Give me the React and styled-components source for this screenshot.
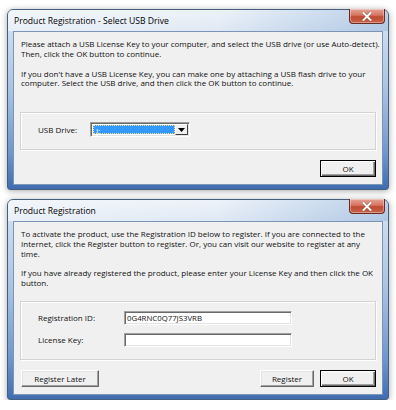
import styled, { createGlobalStyle } from "styled-components";

const GlobalStyle = createGlobalStyle`
  body {
    margin: 0;
    background: #ffffff;
    font-family: "Open Sans", "Noto Sans", "Liberation Sans", sans-serif;
  }
`;

const Page = styled.div`
  display: flex;
  flex-direction: column;
  gap: 9px;
  padding: 9px 7px 0 7px;
`;

const Window = styled.div`
  display: flex;
  flex-direction: column;
  width: 382px;
  height: ${(p) => p.$height}px;
  box-sizing: border-box;
  border: 1px solid #45607f;
  border-radius: 6px 6px 3px 3px;
  background: linear-gradient(
    to bottom,
    #e3ecf6 0px,
    #cddcee 22px,
    #a9c2e2 45%,
    #6f96cc 80%,
    #3f6db0 100%
  );
  box-shadow: 0 1px 6px rgba(0, 0, 0, 0.35);
`;

const TitleBar = styled.div`
  display: flex;
  align-items: flex-start;
  height: 21px;
  padding-left: 6px;
  border-radius: 5px 5px 0 0;
  background: linear-gradient(
    to right,
    rgba(255, 255, 255, 0.55) 0%,
    rgba(255, 255, 255, 0.35) 55%,
    rgba(120, 160, 210, 0.35) 100%
  );
`;

const Title = styled.div`
  align-self: center;
  font-size: 8.6px;
  color: #000000;
  white-space: nowrap;
`;

const CloseButton = styled.div`
  display: flex;
  align-items: center;
  justify-content: center;
  margin-left: auto;
  margin-right: 3px;
  margin-top: -1px;
  width: 36px;
  height: 15px;
  box-sizing: border-box;
  border: 1px solid #6b2a22;
  border-top: none;
  border-radius: 0 0 4px 4px;
  background: linear-gradient(to bottom, #e4a597 0%, #d6735f 45%, #c04a32 55%, #c9634a 100%);
  box-shadow: inset 0 0 0 1px rgba(255, 255, 255, 0.35);
`;

const Client = styled.div`
  flex: 1;
  display: flex;
  flex-direction: column;
  margin: 0 5px 4px 5px;
  background: #f0f0f0;
  border: 1px solid #7c95b6;
  font-size: 8px;
  line-height: 9.8px;
  color: #111111;
  padding: ${(p) => p.$padTop}px 6px 0 7px;
`;

const Para = styled.p`
  margin: 0 0 ${(p) => p.$gap}px 0;
  white-space: nowrap;
`;

const GroupBox = styled.div`
  display: flex;
  flex-direction: column;
  gap: 8px;
  margin: ${(p) => p.$top}px 0 0 -1px;
  padding: 9px 0 12px 17px;
  border: 1px solid #d3d3d3;
  box-shadow: inset 1px 1px 0 #ffffff, 1px 1px 0 #ffffff;
`;

const FieldRow = styled.div`
  display: flex;
  align-items: center;
`;

const Label = styled.div`
  width: ${(p) => p.$width}px;
  white-space: nowrap;
`;

const TextBox = styled.div`
  width: 168px;
  height: 14px;
  box-sizing: border-box;
  background: #ffffff;
  border-top: 1px solid #a0a0a0;
  border-left: 1px solid #a0a0a0;
  border-right: 1px solid #ffffff;
  border-bottom: 1px solid #ffffff;
  box-shadow: inset 1px 1px 0 #696969, inset -1px -1px 0 #e3e3e3;
  padding: 1px 2px;
  font-size: 7.8px;
  line-height: 11px;
  white-space: nowrap;
`;

const Combo = styled.div`
  display: flex;
  width: 100px;
  height: 15px;
  box-sizing: border-box;
  background: #ffffff;
  border-top: 1px solid #a0a0a0;
  border-left: 1px solid #a0a0a0;
  border-right: 1px solid #ffffff;
  border-bottom: 1px solid #ffffff;
  box-shadow: inset 1px 1px 0 #696969, inset -1px -1px 0 #e3e3e3;
  padding: 2px 1px 2px 2px;
`;

const ComboValue = styled.div`
  flex: 1;
  background: #3399ff;
  color: #ffffff;
  outline: 1px dotted #ffe08a;
  outline-offset: -1px;
  padding-left: 3px;
  font-size: 8px;
  line-height: 11px;
`;

const ComboArrow = styled.div`
  display: flex;
  align-items: center;
  justify-content: center;
  width: 13px;
  margin-top: -1px;
  margin-bottom: -1px;
  box-sizing: border-box;
  background: #f0f0f0;
  border-top: 1px solid #ffffff;
  border-left: 1px solid #ffffff;
  border-right: 1px solid #404040;
  border-bottom: 1px solid #404040;
`;

const ButtonBar = styled.div`
  display: flex;
  gap: 6px;
  margin-top: 10px;
`;

const Button = styled.div`
  display: flex;
  align-items: center;
  justify-content: center;
  width: ${(p) => p.$width}px;
  height: 17px;
  box-sizing: border-box;
  background: #f0f0f0;
  font-size: 8px;
  border-top: 1px solid ${(p) => (p.$default ? "#000000" : "#ffffff")};
  border-left: 1px solid ${(p) => (p.$default ? "#000000" : "#ffffff")};
  border-right: 1px solid ${(p) => (p.$default ? "#000000" : "#696969")};
  border-bottom: 1px solid ${(p) => (p.$default ? "#000000" : "#696969")};
  box-shadow: ${(p) =>
    p.$default
      ? "inset 1px 1px 0 #ffffff, inset -1px -1px 0 #696969, inset -2px -2px 0 #a0a0a0"
      : "inset -1px -1px 0 #a0a0a0, inset 1px 1px 0 #e3e3e3"};
  margin-left: ${(p) => (p.$push ? "auto" : "0")};
`;

function CloseX() {
  return (
    <svg width="10" height="9" viewBox="0 0 10 9">
      <path d="M1.5 1 L8.5 8 M8.5 1 L1.5 8" stroke="#3a1410" strokeWidth="3" strokeLinecap="square" opacity="0.35" />
      <path d="M1.5 1 L8.5 8 M8.5 1 L1.5 8" stroke="#ffffff" strokeWidth="2" strokeLinecap="square" />
    </svg>
  );
}

function DownArrow() {
  return (
    <svg width="7" height="4" viewBox="0 0 7 4">
      <path d="M0 0 L7 0 L3.5 4 Z" fill="#000000" />
    </svg>
  );
}

export default function App() {
  return (
    <>
      <GlobalStyle />
      <Page>
        <Window $height={181}>
          <TitleBar>
            <Title>Product Registration - Select USB Drive</Title>
            <CloseButton>
              <CloseX />
            </CloseButton>
          </TitleBar>
          <Client $padTop={7}>
            <Para $gap={10}>
              Please attach a USB License Key to your computer, and select the USB drive (or use Auto-detect).
              <br />
              Then, click the OK button to continue.
            </Para>
            <Para $gap={0}>
              If you don't have a USB License Key, you can make one by attaching a USB flash drive to your
              <br />
              computer. Select the USB drive, and then click the OK button to continue.
            </Para>
            <GroupBox $top={24}>
              <FieldRow>
                <Label $width={52}>USB Drive:</Label>
                <Combo>
                  <ComboValue>J:</ComboValue>
                  <ComboArrow>
                    <DownArrow />
                  </ComboArrow>
                </Combo>
              </FieldRow>
            </GroupBox>
            <ButtonBar>
              <Button $width={56} $default $push>
                OK
              </Button>
            </ButtonBar>
          </Client>
        </Window>

        <Window $height={201}>
          <TitleBar>
            <Title>Product Registration</Title>
            <CloseButton>
              <CloseX />
            </CloseButton>
          </TitleBar>
          <Client $padTop={7}>
            <Para $gap={10}>
              To activate the product, use the Registration ID below to register. If you are connected to the
              <br />
              Internet, click the Register button to register. Or, you can visit our website to register at any
              <br />
              time.
            </Para>
            <Para $gap={0}>
              If you have already registered the product, please enter your License Key and then click the OK
              <br />
              button.
            </Para>
            <GroupBox $top={13}>
              <FieldRow>
                <Label $width={86}>Registration ID:</Label>
                <TextBox>0G4RNC0Q77JS3VRB</TextBox>
              </FieldRow>
              <FieldRow>
                <Label $width={86}>License Key:</Label>
                <TextBox />
              </FieldRow>
            </GroupBox>
            <ButtonBar>
              <Button $width={78}>Register Later</Button>
              <Button $width={54} $push>
                Register
              </Button>
              <Button $width={56} $default>
                OK
              </Button>
            </ButtonBar>
          </Client>
        </Window>
      </Page>
    </>
  );
}
